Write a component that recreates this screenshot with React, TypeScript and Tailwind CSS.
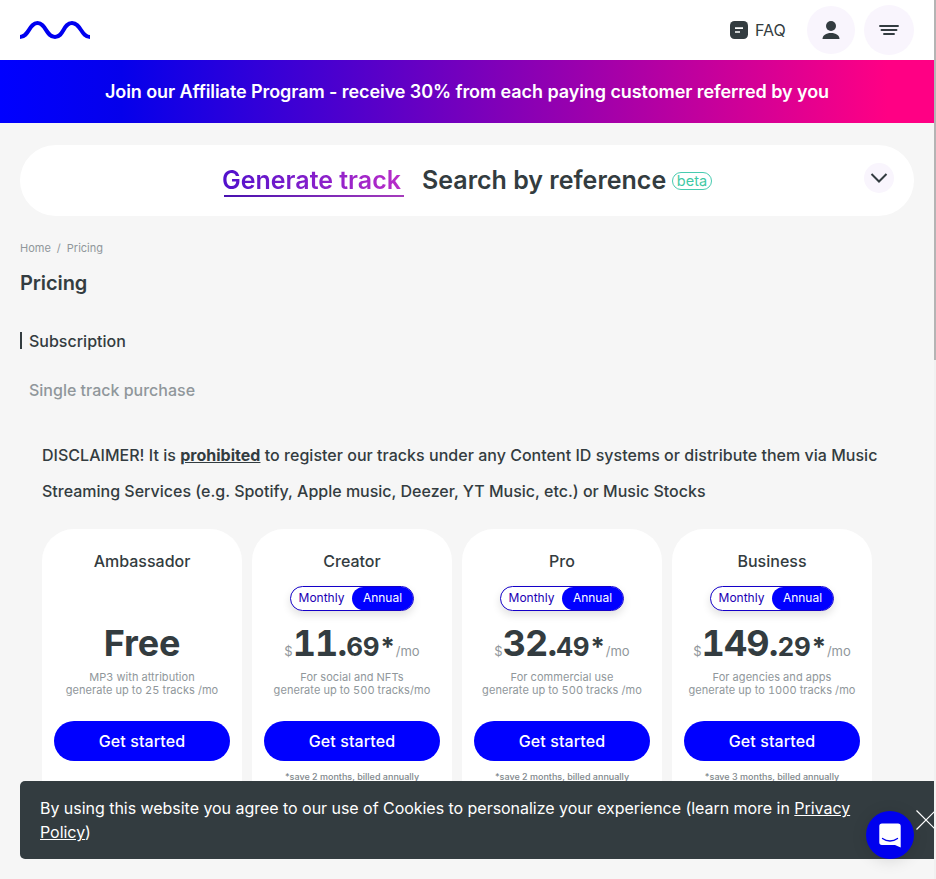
import React from "react";

type Plan = {
  name: string;
  whole: string;
  cents?: string;
  lines: [string, string];
  note?: string;
};

const plans: Plan[] = [
  { name: "Ambassador", whole: "Free", lines: ["MP3 with attribution", "generate up to 25 tracks /mo"] },
  { name: "Creator", whole: "11.", cents: "69*", lines: ["For social and NFTs", "generate up to 500 tracks/mo"], note: "*save 2 months, billed annually" },
  { name: "Pro", whole: "32.", cents: "49*", lines: ["For commercial use", "generate up to 500 tracks /mo"], note: "*save 2 months, billed annually" },
  { name: "Business", whole: "149.", cents: "29*", lines: ["For agencies and apps", "generate up to 1000 tracks /mo"], note: "*save 3 months, billed annually" },
];

function Header() {
  return (
    <header className="flex h-[60px] items-center bg-white pr-5 pl-5">
      <svg width="70" height="20" viewBox="0 0 70 20" fill="none">
        <path d="M0 17C9 17 9 3 17.5 3S26 17 35 17 43 3 52 3s9 14 18 14" stroke="#0000f0" strokeWidth="4" />
      </svg>
      <div className="ml-auto flex items-center">
        <svg width="18" height="18" viewBox="0 0 18 18">
          <rect width="18" height="18" rx="4.5" fill="#333c40" />
          <path d="M5 7.2h8M5 11h5" stroke="#fff" strokeWidth="1.7" />
        </svg>
        <span className="ml-[7px] w-8 text-base leading-6">FAQ</span>
        <button className="ml-5 flex size-12 items-center justify-center rounded-full bg-[#f9f5fd]">
          <svg width="18" height="18" viewBox="0 0 18 18" fill="#333c40">
            <circle cx="9" cy="5" r="5" />
            <path d="M.5 18C.5 14.500 4 12 9 12s8.500 2.500 8.500 6z" />
          </svg>
        </button>
        <button className="ml-[9px] flex size-[50px] items-center justify-center rounded-full bg-[#f9f5fd]">
          <svg width="20" height="10" viewBox="0 0 20 10" stroke="#333c40" strokeWidth="1.9" strokeLinecap="round">
            <path d="M1 1h18M2.500 5h15M5 9h10" />
          </svg>
        </button>
      </div>
    </header>
  );
}

function PlanCard({ plan }: { plan: Plan }) {
  return (
    <article className="flex h-[320px] w-[200px] flex-col items-center rounded-[32px] bg-white px-3 pt-5">
      <h2 className="text-base leading-6 font-medium">{plan.name}</h2>
      <div className="mt-[13px] h-[25px]">
        {plan.cents && (
          <div className="flex h-[25px] w-[124px] rounded-full border border-[#1400c8] bg-white text-[12px] leading-[22px] shadow-[0_4px_8px_rgba(0,0,0,0.12)]">
            <span className="w-[61px] text-center text-[#2000b4]">Monthly</span>
            <span className="h-[23px] w-[61px] rounded-full bg-[#0000ff] text-center text-white">Annual</span>
          </div>
        )}
      </div>
      <div className="mt-[10px] flex h-[44px] items-baseline justify-center text-[36px] leading-[44px] font-bold tabular-nums">
        {plan.cents && <span className="text-[13px] font-normal text-[#90979b]">$</span>}
        <span className={plan.cents ? "tracking-[-0.9px]" : "tracking-[-0.2px]"}>{plan.whole}</span>
        {plan.cents && <span className="text-[26px] tracking-[-0.3px]">{plan.cents}</span>}
        {plan.cents && <span className="text-[13px] font-normal text-[#90979b]">/mo</span>}
      </div>
      <p className="mt-[6px] text-center text-[11px] leading-[13px] tracking-[0.06px] whitespace-nowrap text-[#90979b] tabular-nums">
        {plan.lines[0]}
        <br />
        {plan.lines[1]}
      </p>
      <button className="mt-6 h-10 w-full rounded-full bg-[#0000ff] text-base font-medium tracking-[0.1px] text-white">Get started</button>
      {plan.note && <p className="mt-[9px] text-[9px] leading-[14px] font-medium whitespace-nowrap text-[#80878b]">{plan.note}</p>}
    </article>
  );
}

export default function App() {
  return (
    <div className="relative flex h-[879px] w-full overflow-hidden bg-[#f6f6f6] font-['Inter',sans-serif] text-[#333c40]">
      <div className="relative w-[934px] overflow-hidden">
        <Header />
        <div className="flex h-[63px] items-center justify-center bg-[linear-gradient(90deg,#0000ff_0%,#0500eb_13%,#ff0084_95%)] text-[18px] font-semibold text-white">
          <span className="tracking-[-0.075px] whitespace-nowrap">Join our Affiliate Program - receive 30% from each paying customer referred by you</span>
        </div>
        <main className="px-5 pt-[22px]">
          <div className="flex h-[71px] items-center rounded-[36px] bg-white pr-5 pl-[202px] text-[25px] leading-[33px] font-semibold">
            <div className="mb-px flex h-8 w-[182px] flex-col whitespace-nowrap">
              <span className="h-[31px] w-[182px] bg-[linear-gradient(90deg,#5010cc,#ba2dc8)] bg-clip-text text-transparent">Generate track</span>
              <span className="ml-[2px] h-[2px] w-[180px] shrink-0 bg-[linear-gradient(90deg,#4810b0,#a63cbc)]" />
            </div>
            <span className="ml-[18px] w-[243px] whitespace-nowrap">Search by reference</span>
            <span className="ml-[7px] flex h-[18px] w-10 items-center justify-center rounded-full border border-[#48cbb0] pt-[2px] text-[14.500px] leading-none font-normal text-[#3fc9a5]">beta</span>
            <button className="mb-[5px] ml-auto flex size-[30px] items-center justify-center rounded-full bg-[#f9f5fd]">
              <svg width="18" height="12" viewBox="0 0 18 12" fill="none" stroke="#333c40" strokeWidth="2">
                <path d="m1.500 2 7.500 7.500L16.500 2" />
              </svg>
            </button>
          </div>
          <nav className="mt-6 flex h-4 gap-[6px] text-[11px] leading-4 text-[#90979b]">
            <span>Home</span><span>/</span><span>Pricing</span>
          </nav>
          <h1 className="mt-[12px] text-[20px] leading-[30px] font-semibold tracking-[-0.1px]">Pricing</h1>
          <div className="mt-[31px] flex h-6 items-center font-medium">
            <span className="mb-px h-[17px] w-[2px] bg-[#333c40]" />
            <span className="ml-[7px]">Subscription</span>
          </div>
          <div className="mt-[25px] ml-[9px] h-6 font-medium text-[#90979b]">Single track purchase</div>
          <p className="mt-[35px] ml-[22px] text-base leading-9 font-medium whitespace-nowrap">
            <span className="tracking-[0.025px]">
              DISCLAIMER! It is <b className="font-bold underline">prohibited</b> to register our tracks under any Content ID systems or distribute them via Music
            </span>
            <br />
            Streaming Services (e.g. Spotify, Apple music, Deezer, YT Music, etc.) or Music Stocks
          </p>
          <section className="mt-5 ml-[22px] flex gap-[10px]">
            {plans.map((plan) => <PlanCard key={plan.name} plan={plan} />)}
          </section>
        </main>
        <aside className="absolute top-[781px] left-5 h-[78px] w-[934px] rounded-[5px] bg-[#333c40] px-5 pt-[15px] text-base leading-6 text-white">
          <p className="w-[830px] tracking-[-0.035px]">
            By using this website you agree to our use of Cookies to personalize your experience (learn more in <a className="underline">Privacy Policy</a>)
          </p>
          <svg className="absolute top-[29px] left-[896px]" width="20" height="20" viewBox="0 0 20 20" stroke="#fff" strokeWidth="1.2">
            <path d="m.5.500 19 19m0-19-19 19" />
          </svg>
        </aside>
        <button className="absolute top-[811px] left-[866px] flex size-12 items-center justify-center rounded-full bg-[#0000ee] shadow-[0_2px_16px_rgba(0,0,0,0.12)]">
          <svg width="22" height="25" viewBox="0 0 22 25">
            <path d="M3 .5h16A2.700 2.700 0 0 1 21.700 3.200V24.500L16 22H3A2.700 2.700 0 0 1 .3 19.300V3.200A2.700 2.700 0 0 1 3 .5z" fill="#fff" />
            <path d="M3.500 15.500c4.500 3.300 10.500 3.300 15 0" fill="none" stroke="#0000ee" strokeWidth="1.300" strokeLinecap="round" />
          </svg>
        </button>
      </div>
      <div className="w-[2px] bg-[#f1f1f1]">
        <div className="h-[360px] bg-[#b4b4b4]" />
      </div>
    </div>
  );
}
